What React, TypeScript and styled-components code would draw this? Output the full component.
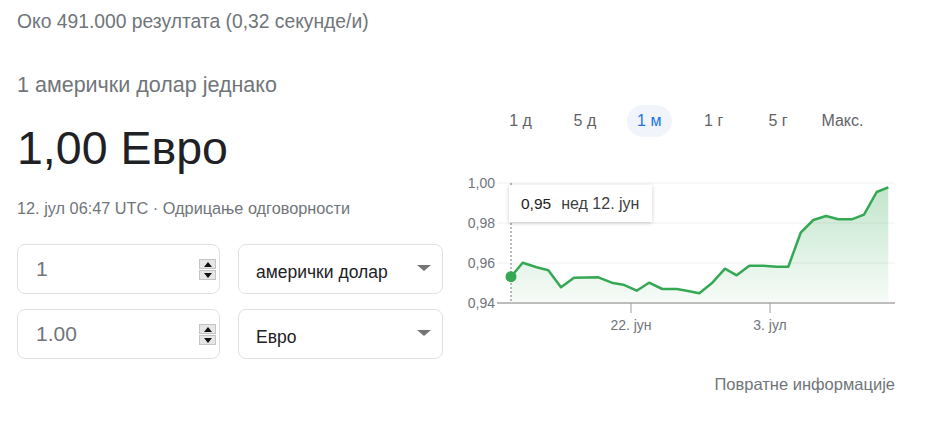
import { styled, createGlobalStyle } from "styled-components";

const GlobalStyle = createGlobalStyle`
  body {
    margin: 0;
    background: #fff;
    font-family: "Liberation Sans", Arial, sans-serif;
  }
`;

const ranges = ["1 д", "5 д", "1 м", "1 г", "5 г", "Макс."];

// chart points, already in svg coordinates
const points: [number, number][] = [
  [51, 106.7], [62.7, 92.7], [76.7, 97.3], [88.3, 100.3], [101, 117.3],
  [114, 107.7], [138.3, 107.3], [151.7, 112.7], [163.3, 114.7], [176.7, 120.7],
  [189, 112.7], [202.3, 119], [216.7, 119], [226.7, 120.7], [239.3, 123.3],
  [251.7, 113.3], [265, 98.7], [276.7, 105.3], [289.3, 95.7], [303.3, 95.7],
  [316.7, 96.7], [328.3, 96.7], [340.7, 62.7], [353.3, 50], [366, 46],
  [378.3, 49.3], [391.7, 49.3], [404, 44.7], [416.7, 22], [428.3, 17.3],
];

const yTicks = [
  { label: "1,00", y: 13 },
  { label: "0,98", y: 53 },
  { label: "0,96", y: 93 },
  { label: "0,94", y: 133 },
];

const xTicks = [
  { label: "22. јун", x: 171 },
  { label: "3. јул", x: 310 },
];

const Spinner = () => (
  <SpinWrap>
    <SpinHalf>
      <svg width="8" height="5" viewBox="0 0 8 5">
        <path d="M0 5 L4 0 L8 5 Z" fill="#111" />
      </svg>
    </SpinHalf>
    <SpinHalf>
      <svg width="8" height="5" viewBox="0 0 8 5">
        <path d="M0 0 L4 5 L8 0 Z" fill="#111" />
      </svg>
    </SpinHalf>
  </SpinWrap>
);

const Chart = () => {
  const line = points.map(([x, y], i) => `${i ? "L" : "M"}${x} ${y}`).join(" ");
  const first = points[0];
  const last = points[points.length - 1];
  const area = `${line} L${last[0]} 133 L${first[0]} 133 Z`;

  return (
    <ChartWrap>
      <svg width="440" height="170" viewBox="0 0 440 170">
        <defs>
          <linearGradient id="fill" x1="0" y1="0" x2="0" y2="1">
            <stop offset="0%" stopColor="#34a853" stopOpacity="0.3" />
            <stop offset="100%" stopColor="#34a853" stopOpacity="0.04" />
          </linearGradient>
        </defs>
        {yTicks.slice(0, 3).map((t) => (
          <line key={t.label} x1="37" x2="435" y1={t.y} y2={t.y} stroke="#f0f0f0" strokeWidth="1" />
        ))}
        {yTicks.map((t) => (
          <text
            key={t.label}
            x="35"
            y={t.y + 5}
            textAnchor="end"
            fontSize="14"
            fill="#70757a"
            fontFamily="Liberation Sans, Arial, sans-serif"
          >
            {t.label}
          </text>
        ))}
        <path d={area} fill="url(#fill)" />
        <line x1="37" x2="435" y1="133" y2="133" stroke="#bdbdbd" strokeWidth="2" />
        {xTicks.map((t) => (
          <g key={t.label}>
            <line x1={t.x} x2={t.x} y1="133" y2="143" stroke="#9e9e9e" strokeWidth="1" />
            <text
              x={t.x}
              y="160"
              textAnchor="middle"
              fontSize="14"
              fill="#70757a"
              fontFamily="Liberation Sans, Arial, sans-serif"
            >
              {t.label}
            </text>
          </g>
        ))}
        <line x1="51" x2="51" y1="13" y2="133" stroke="#777" strokeWidth="1" strokeDasharray="2 2" />
        <path d={line} fill="none" stroke="#34a853" strokeWidth="2.5" strokeLinejoin="round" />
        <circle cx={first[0]} cy={first[1]} r="5.5" fill="#34a853" />
      </svg>
      <Tooltip>
        <TipValue>0,95</TipValue>
        <TipDate>нед 12. јун</TipDate>
      </Tooltip>
    </ChartWrap>
  );
};

const App = () => {
  return (
    <Page>
      <GlobalStyle />
      <Stats>Око 491.000 резултата (0,32 секунде/и)</Stats>
      <Body>
        <LeftCol>
          <Lead>1 амерички долар једнако</Lead>
          <Result>1,00 Евро</Result>
          <Meta>12. јул 06:47 UTC · Одрицање одговорности</Meta>
          <Converter>
            <Field>
              <Amount>1</Amount>
              <Spinner />
            </Field>
            <Select>
              <SelectText>амерички долар</SelectText>
              <Caret />
            </Select>
            <Field>
              <Amount>1.00</Amount>
              <Spinner />
            </Field>
            <Select>
              <SelectText>Евро</SelectText>
              <Caret />
            </Select>
          </Converter>
        </LeftCol>
        <RightCol>
          <Tabs>
            {ranges.map((r) => (
              <Tab key={r} $active={r === "1 м"}>
                {r}
              </Tab>
            ))}
          </Tabs>
          <Chart />
          <Feedback>Повратне информације</Feedback>
        </RightCol>
      </Body>
    </Page>
  );
};

export default App;

const Page = styled.div`
  padding: 11px 0 0 17px;
  width: 883px;
`;

const Stats = styled.div`
  font-size: 19.3px;
  line-height: 22px;
  color: #70757a;
`;

const Body = styled.div`
  display: grid;
  grid-template-columns: 426px 440px;
  column-gap: 17px;
  align-items: start;
  margin-top: 40px;
`;

const LeftCol = styled.div`
  display: flex;
  flex-direction: column;
`;

const Lead = styled.div`
  font-size: 21.5px;
  line-height: 24px;
  color: #70757a;
`;

const Result = styled.div`
  margin-top: 25px;
  font-size: 46.5px;
  line-height: 52px;
  color: #202124;
`;

const Meta = styled.div`
  margin-top: 24px;
  font-size: 16.3px;
  line-height: 20px;
  color: #70757a;
`;

const Converter = styled.div`
  margin-top: 26px;
  display: grid;
  grid-template-columns: 203px 205px;
  column-gap: 18px;
  row-gap: 15px;
`;

const Field = styled.div`
  box-sizing: border-box;
  height: 50px;
  border: 1px solid #dfe1e5;
  border-radius: 8px;
  display: flex;
  align-items: center;
  justify-content: space-between;
  padding: 0 3px 0 18px;
`;

const Amount = styled.span`
  font-size: 21px;
  color: #70757a;
`;

const SpinWrap = styled.div`
  display: flex;
  flex-direction: column;
  gap: 1px;
  margin-top: 1px;
`;

const SpinHalf = styled.div`
  width: 17px;
  height: 10px;
  box-sizing: border-box;
  background: #e6e6e6;
  border: 1px solid #c4c4c4;
  display: flex;
  align-items: center;
  justify-content: center;
`;

const Select = styled.div`
  box-sizing: border-box;
  height: 50px;
  border: 1px solid #dfe1e5;
  border-radius: 8px;
  display: flex;
  align-items: center;
  justify-content: space-between;
  padding: 0 11px 0 17px;
`;

const SelectText = styled.span`
  font-size: 17.5px;
  color: #202124;
  padding-top: 6px;
`;

const Caret = styled.span`
  width: 0;
  height: 0;
  border-left: 7px solid transparent;
  border-right: 7px solid transparent;
  border-top: 6px solid #757575;
  margin-bottom: 2px;
`;

const RightCol = styled.div`
  padding-top: 32px;
  display: flex;
  flex-direction: column;
`;

const Tabs = styled.div`
  display: flex;
  gap: 19.4px;
  padding-left: 38px;
`;

const Tab = styled.div<{ $active?: boolean }>`
  width: 45px;
  height: 32px;
  border-radius: 16px;
  display: flex;
  align-items: center;
  justify-content: center;
  white-space: nowrap;
  font-size: 16px;
  color: ${(p) => (p.$active ? "#1a73e8" : "#5f6368")};
  background: ${(p) => (p.$active ? "#f1f4fb" : "transparent")};
`;

const ChartWrap = styled.div`
  position: relative;
  margin-top: 33px;
  height: 170px;

  svg {
    display: block;
  }
`;

const Tooltip = styled.div`
  position: absolute;
  left: 49px;
  top: 15px;
  width: 143px;
  height: 37px;
  box-sizing: border-box;
  background: #fff;
  box-shadow: 0 1px 4px rgba(0, 0, 0, 0.2);
  display: flex;
  align-items: center;
  gap: 10px;
  padding-left: 12px;
`;

const TipValue = styled.span`
  font-size: 15.5px;
  color: #202124;
`;

const TipDate = styled.span`
  font-size: 16px;
  color: #3c4043;
`;

const Feedback = styled.div`
  margin-top: 34px;
  padding-right: 5px;
  text-align: right;
  font-size: 16.5px;
  line-height: 20px;
  color: #70757a;
`;
